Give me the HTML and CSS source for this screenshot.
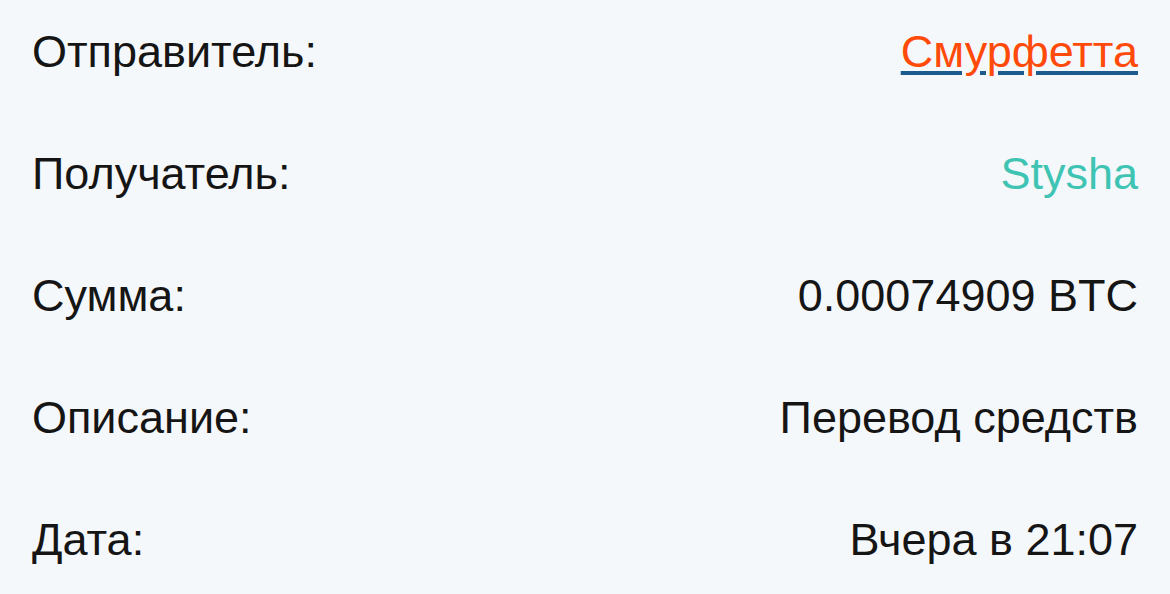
FILE: index.html
```html
<!DOCTYPE html>
<html lang="ru">
<head>
<meta charset="utf-8">
<link rel="stylesheet" href="styles.css">
</head>
<body>
<div class="details">
  <div class="row"><span class="label">Отправитель:</span><a class="value sender" href="#">Смурфетта</a></div>
  <div class="row"><span class="label">Получатель:</span><span class="value recipient">Stysha</span></div>
  <div class="row"><span class="label">Сумма:</span><span class="value">0.00074909 BTC</span></div>
  <div class="row"><span class="label">Описание:</span><span class="value">Перевод средств</span></div>
  <div class="row"><span class="label">Дата:</span><span class="value">Вчера в 21:07</span></div>
</div>
</body>
</html>
```
FILE: styles.css
```css
html, body {
  margin: 0;
  padding: 0;
  background: #f5f8fb;
}
body {
  font-family: "Liberation Sans", Arial, sans-serif;
  color: #151515;
  width: 1170px;
  height: 594px;
  overflow: hidden;
}
.details {
  display: flex;
  flex-direction: column;
  gap: 72px;
  padding: 27px 32px 0 32px;
}
.row {
  display: flex;
  justify-content: space-between;
  align-items: baseline;
  font-size: 45px;
  line-height: 50px;
}
.sender {
  color: #ff4a0a;
  text-decoration: underline;
  text-decoration-color: #1d5b8e;
  text-decoration-thickness: 4px;
  text-underline-offset: 4px;
}
.recipient {
  color: #3fc4b3;
}
```
